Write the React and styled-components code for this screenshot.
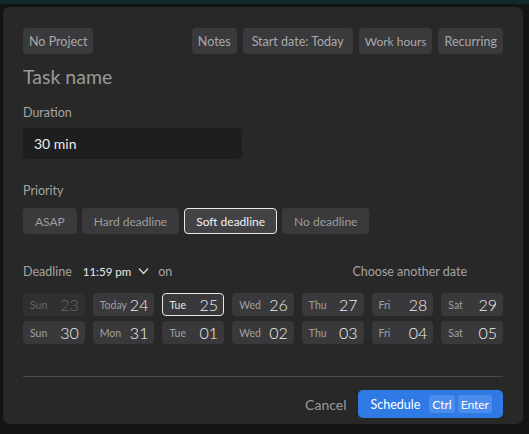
import React, { useState } from "react";
import styled, { createGlobalStyle } from "styled-components";

const GlobalStyle = createGlobalStyle`
  html, body {
    margin: 0;
    padding: 0;
    background: #131414;
    font-family: Lato, "Open Sans", sans-serif;
  }
`;

const Backdrop = styled.div`
  width: 529px;
  height: 434px;
  box-sizing: border-box;
  padding: 3px 6px 0 3px;
  background: #131414;
  border-top: 4px solid #0f2a28;
`;

const Modal = styled.div`
  box-sizing: border-box;
  height: 417px;
  background: #282828;
  border-radius: 7px;
  padding: 21px 20px 0 20px;
`;

const TopBar = styled.div`
  display: flex;
  align-items: center;
  gap: 6px;
`;

const Spacer = styled.div`
  flex: 1;
`;

const Chip = styled.button`
  height: 26px;
  padding: 0 ${(p) => p.$pad || 6}px;
  border: none;
  border-radius: 4px;
  background: #3a3a3c;
  color: #a9a9a9;
  font-family: inherit;
  font-size: ${(p) => p.$size || 12.5}px;
  cursor: pointer;
`;

const Title = styled.div`
  margin-top: 11px;
  font-size: 19.5px;
  color: #9a9a9a;
  line-height: 24px;
`;

const Label = styled.div`
  font-size: 12.5px;
  line-height: 16px;
  color: #a3a3a3;
  margin-top: ${(p) => p.$top || 0}px;
`;

const Input = styled.div`
  margin-top: 7px;
  width: 219px;
  height: 31px;
  box-sizing: border-box;
  padding: 0 11px;
  border-radius: 4px;
  background: #1e1e1e;
  color: #ececec;
  font-size: 14px;
  display: flex;
  align-items: center;
`;

const Segments = styled.div`
  display: flex;
  gap: 5px;
  margin-top: 9px;
`;

const Segment = styled.button`
  height: 26px;
  box-sizing: border-box;
  padding: 0 11px;
  border-radius: 4px;
  border: 1px solid ${(p) => (p.$active ? "#e8e8e8" : "transparent")};
  background: ${(p) => (p.$active ? "#434345" : "#3a3a3c")};
  color: ${(p) => (p.$active ? "#f2f2f2" : "#9d9d9d")};
  font-family: inherit;
  font-size: 12px;
  cursor: pointer;
`;

const DeadlineRow = styled.div`
  margin-top: 29px;
  height: 16px;
  display: flex;
  align-items: center;
  font-size: 12.5px;
  color: #a3a3a3;
`;

const Time = styled.span`
  margin-left: 11px;
  font-size: 11.5px;
  color: #eaeaea;
  display: inline-flex;
  align-items: center;
  gap: 7px;
`;

const On = styled.span`
  margin-left: 9px;
`;

const Other = styled.span`
  margin-right: 36px;
`;

const Grid = styled.div`
  margin-top: 14px;
  display: grid;
  grid-template-columns: repeat(7, 1fr);
  gap: 5px 8px;
`;

const Day = styled.div`
  height: 23px;
  box-sizing: border-box;
  border-radius: 4px;
  padding: 0 5px 0 6px;
  display: flex;
  align-items: center;
  justify-content: space-between;
  background: ${(p) => (p.$past ? "#303030" : "#39393b")};
  border: 1px solid ${(p) => (p.$active ? "#e6e6e6" : "transparent")};
`;

const DayName = styled.span`
  font-size: 10.5px;
  color: ${(p) => (p.$past ? "#666" : p.$bright ? "#e8e8e8" : "#a0a0a0")};
`;

const DayNum = styled.span`
  font-size: 16px;
  font-weight: 300;
  color: ${(p) => (p.$past ? "#6a6a6a" : "#f0f0f0")};
`;

const Divider = styled.div`
  margin-top: 32px;
  height: 1px;
  background: #4a4a4a;
`;

const Footer = styled.div`
  margin-top: 13px;
  display: flex;
  justify-content: flex-end;
  align-items: center;
  gap: 12px;
`;

const Cancel = styled.button`
  border: none;
  background: transparent;
  color: #9b9b9b;
  font-family: inherit;
  font-size: 14px;
  padding: 0;
  cursor: pointer;
`;

const Primary = styled.button`
  height: 28px;
  border: none;
  border-radius: 5px;
  background: #2f7ae5;
  color: #fff;
  font-family: inherit;
  font-size: 12.5px;
  padding: 0 11px 0 12px;
  display: flex;
  align-items: center;
  gap: 3px;
  cursor: pointer;
`;

const Kbd = styled.span`
  height: 18px;
  display: inline-flex;
  align-items: center;
  background: #4b8ded;
  border-radius: 3px;
  padding: 0 3px;
  font-size: 12px;
  color: #fff;
  margin-left: ${(p) => (p.$first ? 6 : 0)}px;
`;

const weeks = [
  [
    { n: "Sun", d: "23", past: true },
    { n: "Today", d: "24" },
    { n: "Tue", d: "25", active: true },
    { n: "Wed", d: "26" },
    { n: "Thu", d: "27" },
    { n: "Fri", d: "28" },
    { n: "Sat", d: "29" },
  ],
  [
    { n: "Sun", d: "30" },
    { n: "Mon", d: "31" },
    { n: "Tue", d: "01" },
    { n: "Wed", d: "02" },
    { n: "Thu", d: "03" },
    { n: "Fri", d: "04" },
    { n: "Sat", d: "05" },
  ],
];

const priorities = ["ASAP", "Hard deadline", "Soft deadline", "No deadline"];

export default function App() {
  const [priority, setPriority] = useState("Soft deadline");

  return (
    <>
      <GlobalStyle />
      <Backdrop>
        <Modal>
          <TopBar>
            <Chip>No Project</Chip>
            <Spacer />
            <Chip>Notes</Chip>
            <Chip $pad={9}>Start date: Today</Chip>
            <Chip $pad={6} $size={12}>Work hours</Chip>
            <Chip>Recurring</Chip>
          </TopBar>
          <Title>Task name</Title>
          <Label $top={16}>Duration</Label>
          <Input>30 min</Input>
          <Label $top={24}>Priority</Label>
          <Segments>
            {priorities.map((p) => (
              <Segment
                key={p}
                $active={p === priority}
                onClick={() => setPriority(p)}
              >
                {p}
              </Segment>
            ))}
          </Segments>
          <DeadlineRow>
            Deadline
            <Time>
              11:59 pm
              <svg width="11" height="8" viewBox="0 0 11 8">
                <path d="M1 1.5 L5.5 6.5 L10 1.5" fill="none" stroke="#dcdcdc" strokeWidth="1.2" />
              </svg>
            </Time>
            <On>on</On>
            <Spacer />
            <Other>Choose another date</Other>
          </DeadlineRow>
          <Grid>
            {weeks.flat().map((c, i) => (
              <Day key={i} $past={c.past} $active={c.active}>
                <DayName $past={c.past} $bright={c.active}>{c.n}</DayName>
                <DayNum $past={c.past}>{c.d}</DayNum>
              </Day>
            ))}
          </Grid>
          <Divider />
          <Footer>
            <Cancel>Cancel</Cancel>
            <Primary>
              Schedule
              <Kbd $first>Ctrl</Kbd>
              <Kbd>Enter</Kbd>
            </Primary>
          </Footer>
        </Modal>
      </Backdrop>
    </>
  );
}
